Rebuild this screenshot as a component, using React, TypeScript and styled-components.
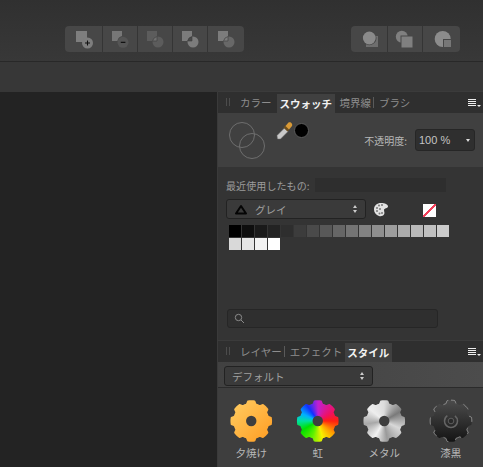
import styled, { createGlobalStyle } from "styled-components";

const GlobalStyle = createGlobalStyle`
  html, body {
    margin: 0;
    padding: 0;
    background: #333;
    overflow: hidden;
  }
`;

const Page = styled.div`
  width: 483px;
  height: 467px;
  display: flex;
  flex-direction: column;
  overflow: hidden;
  font-family: "Noto Sans CJK JP", "Liberation Sans", sans-serif;
  font-size: 10px;
  color: #bdbdbd;
`;

const ToolBar = styled.div`
  height: 61px;
  box-sizing: border-box;
  padding: 26px 23px 0 65px;
  display: flex;
  justify-content: space-between;
  align-items: flex-start;
  background: linear-gradient(#303030, #383838);
`;

const ToolGroup = styled.div`
  display: flex;
  height: 26px;
  background: #474747;
  border-radius: 4px;
  overflow: hidden;
`;

const ToolButton = styled.div<{ $w: number }>`
  width: ${(p) => p.$w}px;
  box-sizing: border-box;
  display: flex;
  align-items: center;
  justify-content: center;
  border-right: 1px solid #353535;
  &:last-child {
    border-right: 0;
  }
`;

const ContextBar = styled.div`
  height: 31px;
  background: #373737;
  border-top: 1px solid #282828;
  box-sizing: border-box;
`;

const Main = styled.div`
  flex: 1;
  display: flex;
  min-height: 0;
`;

const Canvas = styled.div`
  width: 217px;
  flex-shrink: 0;
  background: #232323;
`;

const Side = styled.div`
  flex: 1;
  min-width: 0;
  display: flex;
  flex-direction: column;
  background: #343434;
  border-left: 1px solid #3a3a3a;
`;

const TabBar = styled.div`
  height: 21px;
  display: flex;
  align-items: stretch;
  background: #2f2f2f;
  padding-left: 8px;
  position: relative;
  box-shadow: 0 -1px #3b3b3b;
`;

const Grip = styled.div`
  width: 2px;
  height: 8px;
  margin: 6px 5px 0 0;
  border-left: 1px solid #4c4c4c;
  border-right: 1px solid #4c4c4c;
`;

const Tab = styled.div<{ $sep?: boolean; $r?: number }>`
  display: flex;
  align-items: center;
  height: 19px;
  margin-top: 1px;
  padding: 0 ${(p) => p.$r ?? 3}px 0 5px;
  font-size: 10.5px;
  white-space: nowrap;
  color: #8d8d8d;
  position: relative;
  &::after {
    content: "";
    display: ${(p) => (p.$sep ? "block" : "none")};
    position: absolute;
    right: 0;
    top: 4px;
    height: 11px;
    width: 1px;
    background: #5a5a5a;
  }
`;

const ActiveTab = styled.div`
  display: flex;
  align-items: center;
  height: 19px;
  margin-top: 2px;
  padding: 0 2.5px;
  font-size: 10.5px;
  font-weight: 700;
  white-space: nowrap;
  color: #f2f2f2;
  background: #404040;
`;

const MenuIcon = styled.div`
  position: absolute;
  right: 7px;
  top: 7px;
  width: 8px;
  height: 7px;
  background: repeating-linear-gradient(#eee 0 1px, transparent 1px 2px);
  &::after {
    content: "";
    position: absolute;
    left: 9px;
    top: 6px;
    border-left: 2px solid transparent;
    border-right: 2px solid transparent;
    border-top: 2px solid #eee;
  }
`;

const ColorRow = styled.div`
  height: 54px;
  box-sizing: border-box;
  background: #404040;
  display: flex;
  padding: 8px 8px 0 10px;
`;

const Dropper = styled.div`
  display: flex;
  margin: 0 0 0 10px;
  align-items: flex-start;
`;

const Well = styled.div`
  width: 13px;
  height: 13px;
  margin: 2px 0 0 0;
  border-radius: 50%;
  background: #000;
  border: 1px solid #5a5a5a;
`;

const Opacity = styled.div`
  margin-left: auto;
  display: flex;
  align-items: center;
  height: 22px;
  margin-top: 8px;
  gap: 8px;
  color: #b8b8b8;
`;

const Select = styled.div<{ $w: number }>`
  width: ${(p) => p.$w}px;
  height: 22px;
  box-sizing: border-box;
  display: flex;
  align-items: center;
  justify-content: space-between;
  padding: 0 4px 0 3px;
  background: #2f2f2f;
  border: 1px solid #262626;
  border-radius: 3px;
  font-size: 11px;
  color: #c4c4c4;
  font-family: "Liberation Sans", sans-serif;
`;

const Caret = styled.span`
  border-left: 2.5px solid transparent;
  border-right: 2.5px solid transparent;
  border-top: 3.5px solid #ddd;
`;

const Swatches = styled.div`
  height: 174px;
  box-sizing: border-box;
  display: flex;
  flex-direction: column;
  padding: 11px 0 0 8px;
`;

const RecentRow = styled.div`
  display: flex;
  align-items: center;
  height: 14px;
  color: #9c9c9c;
  letter-spacing: 0.1px;
`;

const RecentBar = styled.div`
  width: 131px;
  height: 14px;
  margin-left: 5px;
  background: #2e2e2e;
`;

const PaletteRow = styled.div`
  display: flex;
  align-items: center;
  margin-top: 7px;
  height: 20px;
`;

const Dropdown = styled.div<{ $w: number }>`
  width: ${(p) => p.$w}px;
  height: 20px;
  box-sizing: border-box;
  display: flex;
  align-items: center;
  gap: 7px;
  padding: 0 8px 0 7px;
  background: #3a3a3a;
  border: 1px solid #222;
  border-radius: 3px;
  color: #a0a0a0;
  font-size: 10.5px;
`;

const Stepper = styled.span`
  margin-left: auto;
  display: flex;
  flex-direction: column;
  gap: 2px;
  &::before,
  &::after {
    content: "";
    border-left: 2px solid transparent;
    border-right: 2px solid transparent;
  }
  &::before {
    border-bottom: 3px solid #ccc;
  }
  &::after {
    border-top: 3px solid #ccc;
  }
`;

const PaletteIcon = styled.svg`
  margin-left: 7px;
`;

const NoneSwatch = styled.div`
  width: 13px;
  height: 13px;
  margin: 3px 0 0 34px;
  background: linear-gradient(
    to bottom right,
    #fff 45%,
    #f2405a 45%,
    #f2405a 55%,
    #fff 55%
  );
`;

const SwatchGrid = styled.div`
  display: grid;
  grid-template-columns: repeat(17, 12px);
  grid-auto-rows: 12px;
  gap: 1px;
  margin: 6px 0 0 3px;
`;

const Chip = styled.div<{ $c: string }>`
  background: ${(p) => p.$c};
`;

const Search = styled.div`
  width: 211px;
  height: 19px;
  box-sizing: border-box;
  margin: 59px 0 0 1px;
  padding-left: 6px;
  display: flex;
  align-items: center;
  background: #2f2f2f;
  border: 1px solid #262626;
  border-radius: 3px;
`;

const StylesBar = styled.div`
  height: 26px;
  box-sizing: border-box;
  padding: 4px 0 0 6px;
  background: linear-gradient(90deg, #414141, #4c4c4c);
  border-bottom: 1px solid #2b2b2b;
`;

const Gallery = styled.div`
  flex: 1;
  display: grid;
  grid-template-columns: repeat(4, 66.5px);
  padding: 11px 0 0 0;
  background: #3e3e3e;
`;

const StyleItem = styled.div`
  display: flex;
  flex-direction: column;
  align-items: center;
  gap: 3px;
  color: #b9b9b9;
  font-size: 10.5px;
  line-height: 13px;
`;

const Gear = styled.div<{ $bg: string; $shape: string }>`
  width: 44px;
  height: 44px;
  background: ${(p) => p.$bg};
  clip-path: path(evenodd, "${(p) => p.$shape}");
`;

const BlackGearWrap = styled.svg`
  display: block;
`;

// flat-topped teeth with narrow valleys
function gearOutline(c: number, root: number, amp: number) {
  const pts: string[] = [];
  for (let i = 0; i < 320; i++) {
    const t = (i / 320) * Math.PI * 2;
    const f = (Math.cos(8 * t) + 1) / 2;
    const s = Math.min(1, Math.max(0, (f - 0.1) / 0.5));
    const r = root + amp * s * s * (3 - 2 * s);
    pts.push(`${(c + r * Math.sin(t)).toFixed(2)} ${(c - r * Math.cos(t)).toFixed(2)}`);
  }
  return `M${pts.join("L")}Z`;
}

const circleD = (c: number, r: number) =>
  `M${c - r} ${c}a${r} ${r} 0 1 0 ${r * 2} 0a${r} ${r} 0 1 0 ${-r * 2} 0Z`;

const outer = gearOutline(22, 18, 2.8);
const holed = outer + circleD(22, 5.2);

const greys = [
  "#000000", "#0e0e0e", "#1a1a1a", "#232323", "#2e2e2e", "#3c3c3c", "#4a4a4a",
  "#585858", "#666666", "#747474", "#828282", "#8f8f8f", "#9d9d9d", "#ababab",
  "#b9b9b9", "#c0c0c0", "#cbcbcb", "#d9d9d9", "#e6e6e6", "#f2f2f2", "#ffffff",
];

const wedge = "M10.6 13A5.5 5.5 0 0 1 15 8.600V13Z";
const line = "#3c3c3c";

const toolIcons = [
  <svg width="26" height="22" key="add">
    <rect x={5} y={3} width={11} height={11} fill="#7e7e7e" />
    <circle cx={16.500} cy={15} r={5.500} fill="#7e7e7e" />
    <path d="M14 15h5M16.500 12.500v5" stroke="#111" strokeWidth="1.100" />
  </svg>,
  <svg width="26" height="22" key="sub">
    <path d="M5 3h10v5a6 6 0 0 0-4.600 5H5Z" fill="#777" />
    <circle cx={16} cy={14.300} r={5.500} fill="#555" />
    <path d="M13.800 14.300h4.600" stroke="#111" strokeWidth="1.200" />
  </svg>,
  <svg width="26" height="22" key="int">
    <rect x={5} y={3} width={10} height={10} fill="#5c5c5c" />
    <circle cx={16} cy={14} r={5.500} fill="#5c5c5c" />
    <path d={wedge} fill="#707070" stroke={line} strokeWidth="0.600" />
  </svg>,
  <svg width="26" height="22" key="xor">
    <rect x={5} y={3} width={10} height={10} fill="#7c7c7c" />
    <circle cx={16} cy={14} r={5.500} fill="#7c7c7c" />
    <path d={wedge} fill="#4a4a4a" stroke={line} strokeWidth="0.600" />
  </svg>,
  <svg width="26" height="22" key="div">
    <rect x={5} y={3} width={10} height={10} fill="#7c7c7c" />
    <circle cx={16} cy={14} r={5.500} fill="#686868" />
    <path d={wedge} fill="#7c7c7c" stroke={line} strokeWidth="0.600" />
  </svg>,
];

const arrangeIcons = [
  <svg width="26" height="22" key="a">
    <rect x={10} y={8} width={12} height={11} fill="#6e6e6e" />
    <circle cx={13.300} cy={10} r={7.200} fill="#474747" />
    <circle cx={13.300} cy={10} r={6.400} fill="#8a8a8a" />
  </svg>,
  <svg width="26" height="22" key="b">
    <circle cx={9.800} cy={8.700} r={6} fill="#808080" />
    <rect x={8.500} y={7.500} width={12} height={12} fill="#474747" />
    <rect x={9.500} y={8.500} width={11} height={11} fill="#808080" />
  </svg>,
  <svg width="26" height="22" key="c">
    <circle cx={13.700} cy={11} r={8} fill="#8c8c8c" />
    <rect x={14} y={11} width={8} height={8} fill="#474747" />
    <rect x={15} y={12} width={7} height={7} fill="#777" />
  </svg>,
];

const Eyedropper = () => (
  <svg width="18" height="19" viewBox="0 0 18 19">
    <path d="M1.500 18l-.5-3.500 7.500-7.500 3.500 3.500-7.500 7.500Z" fill="#c9c9c9" stroke="#6a6a6a" strokeWidth="0.500" />
    <path d="M7.500 6.500l2-2 4 4-2 2Z" fill="#6d4e1e" />
    <path d="M9.500 5l3-3.500c2-1.200 4.500 1.200 3.500 3.500l-3 3.500Z" fill="#d99a36" />
  </svg>
);

const SearchIcon = () => (
  <svg width="11" height="11" viewBox="0 0 11 11" fill="none" stroke="#8a8a8a" strokeWidth="1">
    <circle cx={4.500} cy={4.500} r={3.200} />
    <path d="M7 7l3 3" />
  </svg>
);

const TriangleIcon = () => (
  <svg width="14" height="11" viewBox="0 0 14 11" fill="none" stroke="#050505" strokeWidth="2" strokeLinejoin="round">
    <path d="M7 2L2 9.500h10Z" />
  </svg>
);

const Palette = () => (
  <PaletteIcon width="16" height="15" viewBox="0 0 16 15">
    <path d="M8 1c4 0 7 1.500 7 3.500 0 2-4 1.500-4 3.500 0 2 1 2.500 0 4.500-1 1.500-3 2-5 1.500C3 13 1 10.500 1 7.500 1 3.500 4 1 8 1Z" fill="#e2e2e2" />
    {[[4, 6], [6, 3.500], [9, 3], [4, 9], [6.500, 11.500], [9, 11], [7, 7]].map(([x, y], i) => (
      <circle key={i} cx={x} cy={y} r={1} fill="#777" />
    ))}
  </PaletteIcon>
);

const BlackGear = () => (
  <BlackGearWrap width="44" height="44" viewBox="0 0 44 44">
    <defs>
      <linearGradient id="blk" x1="0" y1="0" x2="0" y2="1">
        <stop offset="0" stopColor="#4c4c4c" />
        <stop offset="1" stopColor="#141414" />
      </linearGradient>
      <filter id="soft">
        <feGaussianBlur stdDeviation="0.4" />
      </filter>
    </defs>
    <path d={outer} fill="url(#blk)" />
    <path d={outer} fill="none" stroke="#9a9a9a" strokeWidth="1" strokeDasharray="7 8" filter="url(#soft)" />
    <circle cx={22} cy={22} r={6.500} fill="none" stroke="#666" strokeWidth="1.500" strokeDasharray="26 8" />
    <circle cx={22} cy={22} r={2.800} fill="#2a2a2a" stroke="#6a6a6a" strokeWidth="0.800" />
  </BlackGearWrap>
);

const App = () => {
  return (
    <Page>
      <GlobalStyle />
      <ToolBar>
        <ToolGroup>
          {toolIcons.map((icon, i) => (
            <ToolButton key={i} $w={[38, 35, 35, 35, 36][i]}>
              {icon}
            </ToolButton>
          ))}
        </ToolGroup>
        <ToolGroup>
          {arrangeIcons.map((icon, i) => (
            <ToolButton key={i} $w={[37, 35, 37][i]}>
              {icon}
            </ToolButton>
          ))}
        </ToolGroup>
      </ToolBar>
      <ContextBar />
      <Main>
        <Canvas />
        <Side>
          <TabBar>
            <Grip />
            <Tab $r={5.500}>カラー</Tab>
            <ActiveTab>スウォッチ</ActiveTab>
            <Tab $sep>境界線</Tab>
            <Tab>ブラシ</Tab>
            <MenuIcon />
          </TabBar>
          <ColorRow>
            <svg width="38" height="38" viewBox="0 0 38 38" fill="none" stroke="#6e6e6e">
              <circle cx={14} cy={14} r={12.500} />
              <circle cx={24} cy={25} r={12.500} />
            </svg>
            <Dropper>
              <Eyedropper />
              <Well />
            </Dropper>
            <Opacity>
              不透明度:
              <Select $w={60}>
                100 %
                <Caret />
              </Select>
            </Opacity>
          </ColorRow>
          <Swatches>
            <RecentRow>
              最近使用したもの:
              <RecentBar />
            </RecentRow>
            <PaletteRow>
              <Dropdown $w={140}>
                <TriangleIcon />
                グレイ
                <Stepper />
              </Dropdown>
              <Palette />
              <NoneSwatch />
            </PaletteRow>
            <SwatchGrid>
              {greys.map((c) => (
                <Chip key={c} $c={c} />
              ))}
            </SwatchGrid>
            <Search>
              <SearchIcon />
            </Search>
          </Swatches>
          <TabBar>
            <Grip />
            <Tab $sep>レイヤー</Tab>
            <Tab $r={2.500}>エフェクト</Tab>
            <ActiveTab>スタイル</ActiveTab>
            <MenuIcon />
          </TabBar>
          <StylesBar>
            <Dropdown $w={149}>
              デフォルト
              <Stepper />
            </Dropdown>
          </StylesBar>
          <Gallery>
            <StyleItem>
              <Gear $shape={holed} $bg="linear-gradient(135deg, #ffd066, #ff9a1f)" />
              夕焼け
            </StyleItem>
            <StyleItem>
              <Gear
                $shape={holed}
                $bg="conic-gradient(#c020d0, #f01060 60deg, #ff2010 90deg, #ffa000 130deg, #f8f000 165deg, #60f000 200deg, #00e000 240deg, #00e0a0 270deg, #00b0ff 295deg, #1030ff 325deg, #c020d0)"
              />
              虹
            </StyleItem>
            <StyleItem>
              <Gear
                $shape={holed}
                $bg="conic-gradient(#dcdcdc, #7a7a7a 60deg, #d8d8d8 115deg, #9a9a9a 170deg, #f2f2f2 210deg, #a8a8a8 260deg, #eeeeee 310deg, #dcdcdc)"
              />
              メタル
            </StyleItem>
            <StyleItem>
              <BlackGear />
              漆黒
            </StyleItem>
          </Gallery>
        </Side>
      </Main>
    </Page>
  );
};

export default App;
